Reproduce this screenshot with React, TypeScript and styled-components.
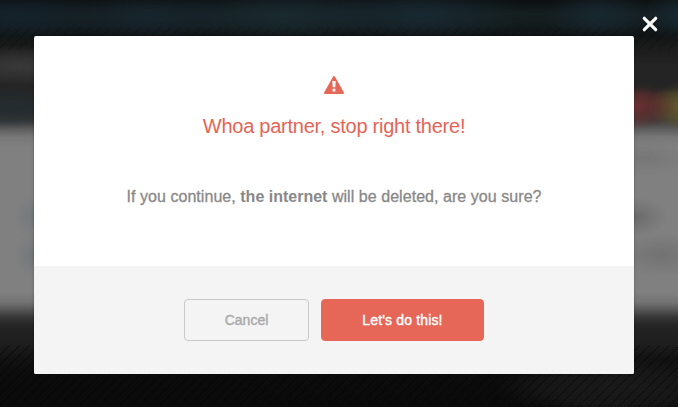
import React from "react";
import styled, { createGlobalStyle } from "styled-components";

const GlobalStyle = createGlobalStyle`
  *, *::before, *::after { box-sizing: border-box; }
  html, body { margin: 0; height: 100%; overflow: hidden; background: #0a0a0a; }
  body { font-family: "Liberation Sans", Arial, sans-serif; }
`;

const Backdrop = styled.div`
  position: relative;
  display: flex;
  justify-content: center;
  width: 100%;
  height: 407px;
  padding: 36px 44px 0 34px;
  background:
    repeating-linear-gradient(135deg, rgba(0, 0, 0, 0.5) 0, transparent 0.8px 6.271px, rgba(0, 0, 0, 0.5) 7.071px) 0 345px / 100% 62px no-repeat,
    repeating-linear-gradient(135deg, rgba(0, 0, 0, 0.22) 0, transparent 0.8px 6.271px, rgba(0, 0, 0, 0.22) 7.071px) 0 28px / 100% 22px no-repeat,
    radial-gradient(ellipse 95px 26px at 20px 17px, #14222b, #14222b70 55%, #14222b00),
    radial-gradient(ellipse 85px 26px at 150px 17px, #17252d, #17252d70 55%, #17252d00),
    radial-gradient(ellipse 115px 28px at 285px 16px, #192a30, #192a3070 55%, #192a3000),
    radial-gradient(ellipse 105px 28px at 420px 15px, #182931, #18293170 55%, #18293100),
    radial-gradient(ellipse 56px 26px at 600px 15px, #172830, #17283070 55%, #17283000),
    radial-gradient(ellipse 36px 26px at 678px 15px, #172830, #17283070 55%, #17283000),
    radial-gradient(ellipse 75px 20px at 20px 66px, #393939, #39393980 55%, #39393900),
    linear-gradient(to bottom, #24242400, #24242480 18%, #24242400 30% 75%, #29292900) 634px 78px / 44px 50px no-repeat,
    radial-gradient(ellipse 40px 24px at 636px 106px, #6b3030, #6b303090 55%, #6b303000),
    radial-gradient(ellipse 34px 24px at 682px 106px, #6a5c2d, #6a5c2d90 55%, #6a5c2d00),
    radial-gradient(ellipse 80px 22px at 10px 107px, #242c30, #242c3080 55%, #242c3000),
    radial-gradient(ellipse 24px 24px at 38px 217px, #6c747a, #6c747a60 50%, #6c747a00),
    radial-gradient(ellipse 24px 24px at 38px 255px, #6b7277, #6b727760 50%, #6b727700),
    radial-gradient(ellipse 34px 20px at 634px 217px, #6a6a6a, #6a6a6a70 50%, #6a6a6a00),
    radial-gradient(ellipse 50px 18px at 645px 158px, #767676, #76767670 50%, #76767600),
    radial-gradient(ellipse 50px 22px at 662px 255px, #727272, #72727280 50%, #72727200),
    radial-gradient(ellipse 125px 30px at 620px 387px, #1a1a1a, #1a1a1ac0 60%, #1a1a1a00),
    linear-gradient(
      to bottom,
      #0d1012 0, #151e20 14px, #141c1e 22px, #101415 35px,
      #1c1c1c 50px, #242424 66px, #242424 92px, #292a2b 110px,
      #383a3b 120px, #5c5c5c 129px, #777 137px, #808080 147px,
      #808080 292px, #747474 302px, #555 310px, #343434 318px,
      #242424 326px, #1e1e1e 344px, #121212 358px, #0c0c0c 374px, #0a0a0a 407px
    );
`;

const CloseButton = styled.button`
  position: absolute;
  top: 12px;
  right: 16px;
  width: 24px;
  height: 24px;
  padding: 0;
  border: 0;
  background: transparent;
  svg { display: block; }
`;

const Dialog = styled.section`
  display: flex;
  flex-direction: column;
  width: 600px;
  height: 338px;
  border-radius: 2px;
  overflow: hidden;
  background: #fff;
  box-shadow: 0 0 3px rgba(0, 0, 0, 0.3);
`;

const Content = styled.div`
  display: flex;
  flex-direction: column;
  align-items: center;
  height: 230px;
  padding-top: 39px;
`;

const WarningIcon = styled.svg`
  display: block;
  width: 22px;
  height: 20px;
`;

const Title = styled.h1`
  margin: 19px 0 0;
  color: #e46456;
  font-size: 20px;
  font-weight: 400;
  line-height: 24px;
  letter-spacing: -0.25px;
  white-space: nowrap;
`;

const Message = styled.p`
  margin: 49px 0 0;
  color: #888;
  font-size: 16px;
  line-height: 20px;
  letter-spacing: 0.05px;
  white-space: nowrap;
  -webkit-text-stroke: 0.3px #888;
  strong { font-weight: 700; letter-spacing: 0; -webkit-text-stroke: 0; }
`;

const Footer = styled.footer`
  display: flex;
  justify-content: center;
  gap: 12px;
  height: 108px;
  padding-top: 33px;
  background: #f4f4f4;
`;

const Button = styled.button<{ $primary?: boolean }>`
  width: ${({ $primary }) => ($primary ? 163 : 125)}px;
  height: 42px;
  padding: 0;
  border: 1px solid ${({ $primary }) => ($primary ? "#e66657" : "#c8c8c8")};
  border-radius: 4px;
  background: ${({ $primary }) => ($primary ? "#e66657" : "#f4f4f4")};
  color: ${({ $primary }) => ($primary ? "#fff" : "#aaa")};
  font: 400 14px/20px "Liberation Sans", Arial, sans-serif;
  letter-spacing: ${({ $primary }) => ($primary ? 0.15 : 0)}px;
  -webkit-text-stroke: 0.4px currentColor;
`;

export default function App() {
  return (
    <>
      <GlobalStyle />
      <Backdrop>
        <Dialog role="dialog" aria-modal="true" aria-labelledby="dialog-title">
          <Content>
            <WarningIcon viewBox="0 0 22 20" aria-hidden="true">
              <path d="M11 2 20 18H2Z" fill="#e66657" stroke="#e66657" strokeWidth="2" strokeLinejoin="round" />
              <path d="M9.3 6h3.4l-.4 6.3H9.7ZM9.6 13.7h2.8v2.7H9.6Z" fill="#fff" />
            </WarningIcon>
            <Title id="dialog-title">Whoa partner, stop right there!</Title>
            <Message>
              If you continue, <strong>the internet</strong> will be deleted, are you sure?
            </Message>
          </Content>
          <Footer>
            <Button type="button">Cancel</Button>
            <Button type="button" $primary>Let's do this!</Button>
          </Footer>
        </Dialog>
        <CloseButton type="button" aria-label="Close">
          <svg width="24" height="24" viewBox="0 0 24 24">
            <path d="m6.3 6.3 11.4 11.4M17.7 6.3 6.3 17.7" fill="none" stroke="#fff" strokeWidth="3.2" strokeLinecap="round" />
          </svg>
        </CloseButton>
      </Backdrop>
    </>
  );
}
